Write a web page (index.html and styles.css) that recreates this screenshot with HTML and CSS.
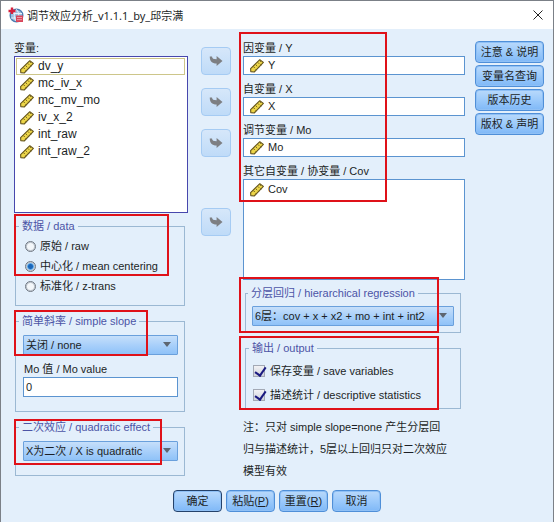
FILE: index.html
```html
<!DOCTYPE html>
<html lang="zh-CN">
<head>
  <meta charset="UTF-8">
  <meta name="viewport" content="width=device-width, initial-scale=1">
  <title>调节效应分析_v1.1.1_by_邱宗满</title>
  <link rel="stylesheet" href="styles.css">
</head>
<body>
  <!-- shared icons -->
  <svg width="0" height="0" class="sprite">
    <symbol id="ruler" viewBox="0 0 14 14">
      <path d="M.6 9.6 L9.8 .7 L13.4 3.4 L4.2 13 L.8 12.6 Z" fill="#ecd548" stroke="#66561c" stroke-width="1.1" stroke-linejoin="round"/>
      <path d="M3.4 7.6l1.4 1.4M5.6 5.5l1.4 1.4M7.8 3.4l1.4 1.4M9.6 1.6l1.2 1.2M5.6 10.2l.9.9M8 7.8l.9.9M10.4 5.4l.9.9" stroke="#66561c" stroke-width=".9"/>
    </symbol>
    <symbol id="arrow" viewBox="0 0 14 12">
      <path d="M.8 1.5 L3 1.5 C3.2 3.6 4.4 4.2 7.6 4.2 V1 L13.5 6 L7.6 11 V8.6 C3 8.6 .6 6 .8 1.5 Z" fill="#7d7f83"/>
    </symbol>
  </svg>

  <div class="window">
    <header class="titlebar">
      <svg class="app-icon" width="16" height="16" viewBox="0 0 16 16">
        <circle cx="8.5" cy="8.5" r="6.3" fill="#9dc0e0" stroke="#4b7cb0" stroke-width="1.4"/>
        <path d="M3 6.5h11M3 11h11M8.5 2.5c-3 3-3 9 0 12c3-3 3-9 0-12" fill="none" stroke="#e9f2fa"/>
        <path d="M4 .5v6.5M.5 4h7" stroke="#d5203c" stroke-width="2.4"/>
        <rect x="8" y="8.5" width="7" height="6.5" fill="#d8455a"/>
        <path d="M9 10.5h5M9 12.7h5" stroke="#f0b4bc" stroke-width=".8"/>
      </svg>
      <h1>调节效应分析_v1.1.1_by_邱宗满</h1>
      <button class="close" aria-label="关闭">
        <svg width="10" height="10" viewBox="0 0 10 10"><path d="M.5.5l9 9M9.5.5l-9 9" stroke="#222" fill="none"/></svg>
      </button>
    </header>

    <form class="content">
      <div class="left">
        <span class="label" id="vars-label">变量:</span>
        <ul class="list variables" aria-labelledby="vars-label">
          <li class="focused"><svg class="ruler"><use href="#ruler"/></svg>dv_y</li>
          <li><svg class="ruler"><use href="#ruler"/></svg>mc_iv_x</li>
          <li><svg class="ruler"><use href="#ruler"/></svg>mc_mv_mo</li>
          <li><svg class="ruler"><use href="#ruler"/></svg>iv_x_2</li>
          <li><svg class="ruler"><use href="#ruler"/></svg>int_raw</li>
          <li><svg class="ruler"><use href="#ruler"/></svg>int_raw_2</li>
        </ul>

        <div class="group data">
          <fieldset>
            <legend>数据 / data</legend>
            <label class="option"><input type="radio" name="data">原始 / raw</label>
            <label class="option"><input type="radio" name="data" checked>中心化 / mean centering</label>
            <label class="option"><input type="radio" name="data">标准化 / z-trans</label>
          </fieldset>
          <div class="mark"></div>
        </div>

        <div class="group slope">
          <fieldset>
            <legend>简单斜率 / simple slope</legend>
            <div class="select">
              <select aria-label="简单斜率"><option>关闭 / none</option></select>
            </div>
            <label class="label mo-label" for="mo-value">Mo 值 / Mo value</label>
            <input class="text" type="text" id="mo-value" value="0">
          </fieldset>
          <div class="mark"></div>
        </div>

        <div class="group quadratic">
          <fieldset>
            <legend>二次效应 / quadratic effect</legend>
            <div class="select">
              <select aria-label="二次效应"><option>X为二次 / X is quadratic</option></select>
            </div>
          </fieldset>
          <div class="mark"></div>
        </div>
      </div>

      <div class="arrows">
        <button type="button" class="move" aria-label="Y"><svg width="14" height="12"><use href="#arrow"/></svg></button>
        <button type="button" class="move" aria-label="X"><svg width="14" height="12"><use href="#arrow"/></svg></button>
        <button type="button" class="move" aria-label="Mo"><svg width="14" height="12"><use href="#arrow"/></svg></button>
        <button type="button" class="move cov" aria-label="Cov"><svg width="14" height="12"><use href="#arrow"/></svg></button>
      </div>

      <div class="middle">
        <div class="targets">
          <div>
            <label class="label" for="y">因变量 / Y</label>
            <div class="target"><svg class="ruler"><use href="#ruler"/></svg><input type="text" id="y" value="Y"></div>
          </div>
          <div>
            <label class="label" for="x">自变量 / X</label>
            <div class="target"><svg class="ruler"><use href="#ruler"/></svg><input type="text" id="x" value="X"></div>
          </div>
          <div>
            <label class="label" for="mo">调节变量 / Mo</label>
            <div class="target"><svg class="ruler"><use href="#ruler"/></svg><input type="text" id="mo" value="Mo"></div>
          </div>
          <div>
            <span class="label" id="cov-label">其它自变量 / 协变量 / Cov</span>
            <ul class="list covariates" aria-labelledby="cov-label">
              <li><svg class="ruler"><use href="#ruler"/></svg>Cov</li>
            </ul>
          </div>
          <div class="mark"></div>
        </div>

        <div class="group regression">
          <fieldset>
            <legend>分层回归 / hierarchical regression</legend>
            <div class="select">
              <select aria-label="分层回归"><option>6层：cov + x + x2 + mo + int + int2</option></select>
            </div>
          </fieldset>
          <div class="mark"></div>
        </div>

        <div class="group output">
          <fieldset>
            <legend>输出 / output</legend>
            <label class="option"><input type="checkbox" checked>保存变量 / save variables</label>
            <label class="option"><input type="checkbox" checked>描述统计 / descriptive statistics</label>
          </fieldset>
          <div class="mark"></div>
        </div>

        <p class="note">注：只对 simple slope=none 产生分层回<br>归与描述统计，5层以上回归只对二次效应<br>模型有效</p>
      </div>

      <div class="side">
        <button type="button" class="btn">注意 &amp; 说明</button>
        <button type="button" class="btn">变量名查询</button>
        <button type="button" class="btn">版本历史</button>
        <button type="button" class="btn">版权 &amp; 声明</button>
      </div>
    </form>

    <footer class="footer">
      <button class="btn default">确定</button>
      <button class="btn">粘贴(<u>P</u>)</button>
      <button class="btn">重置(<u>R</u>)</button>
      <button class="btn">取消</button>
    </footer>
  </div>
</body>
</html>
```
FILE: styles.css
```css
* {
  box-sizing: border-box;
}

body {
  margin: 0;
  font-family: "Liberation Sans", "Noto Sans CJK SC", sans-serif;
  font-size: 11px;
  line-height: 15px;
  color: #1c1f26;
}

button, input, select {
  margin: 0;
  font: inherit;
  color: inherit;
}

.sprite {
  position: absolute;
}

.window {
  min-height: 100vh;
  border: 1px solid #7b8087;
  border-bottom: 0;
  background: #e3effb;
}

/* title bar */
.titlebar {
  display: flex;
  align-items: center;
  height: 28px;
  padding: 0 10px 0 7px;
  background: #fff;
}

.titlebar h1 {
  flex: 1;
  margin: 0 0 0 3px;
  font: 11px/15px "Noto Sans", "Noto Sans CJK SC", sans-serif;
}

.close {
  display: flex;
  padding: 0;
  border: 0;
  background: none;
}

/* columns */
.content {
  display: flex;
  padding: 12px 9px 0 13px;
}

.left {
  width: 174px;
}

.arrows {
  display: flex;
  flex-direction: column;
  gap: 13px;
  width: 30px;
  margin: 6px 12px 0 13px;
}

.middle {
  flex: 1;
}

.side {
  display: flex;
  flex-direction: column;
  gap: 2px;
  width: 69px;
  margin-left: 10px;
}

.label {
  display: block;
  height: 15px;
  white-space: nowrap;
}

/* lists */
.list {
  margin: 0;
  padding: 1px;
  list-style: none;
  background: #fff;
  border: 1px solid #5b94d0;
}

.list li {
  display: flex;
  align-items: center;
  height: 17px;
  padding-left: 4px;
  border: 1px solid transparent;
}

.variables {
  height: 157px;
  padding: 1px;
  border-color: #4747ad;
  font-size: 12px;
}

.variables li {
  padding-left: 3px;
}

.list .focused {
  margin-right: 1px;
  border-color: #cdc68a;
}

.covariates {
  height: 101px;
}

.ruler {
  flex: none;
  width: 14px;
  height: 14px;
  margin-right: 4px;
}

/* target fields */
.targets {
  position: relative;
  display: flex;
  flex-direction: column;
  gap: 7px;
}

.target {
  display: flex;
  align-items: center;
  height: 19px;
  padding-left: 6px;
  background: #fff;
  border: 1px solid #5b94d0;
}

.target input {
  flex: 1;
  min-width: 0;
  padding: 0;
  border: 0;
  background: none;
}

/* group boxes */
.group {
  position: relative;
  margin: 8px 3px 0 1px;
}

.group fieldset {
  min-width: 0;
  margin: 0;
  padding: 6px 6px 14px 7px;
  border: 1px solid #9bb8d3;
}

.group legend {
  height: 15px;
  margin-left: -4px;
  padding: 0 3px;
  color: #4c54a6;
  white-space: nowrap;
}

.data {
  margin-top: 6px;
}

.data fieldset {
  padding: 2px 6px 9px 9px;
}

.data legend {
  margin-left: -6px;
}

.regression {
  margin: 6px 4px 0 2px;
}

.regression fieldset {
  padding: 5px 6px 6px 6px;
}

.output {
  margin: 8px 4px 0 2px;
}

.output fieldset {
  padding: 3px 6px 1px 7px;
}

.option {
  display: flex;
  align-items: center;
  gap: 4px;
  height: 20px;
  white-space: nowrap;
}

.output .option {
  gap: 5px;
  height: 24px;
}

input[type="radio"] {
  appearance: none;
  width: 11px;
  height: 11px;
  border: 1px solid #6f7782;
  border-radius: 50%;
  background: #f4f7fa;
  box-shadow: inset 0 0 0 1px #bcc4cd;
}

input[type="radio"]:checked {
  background: radial-gradient(circle, #1b66b8 0 2px, #5aa9ec 3px, #d4e8fa 4px);
}

input[type="checkbox"] {
  appearance: none;
  width: 12px;
  height: 12px;
  border: 1px solid #a3a9b5;
  background: linear-gradient(#f2f2f5, #d0d3dc);
}

/* tick */
input[type="checkbox"]:checked::after {
  content: "";
  display: block;
  width: 5px;
  height: 9px;
  margin: -1px 0 0 3px;
  border: solid #1a1a80;
  border-width: 0 2px 2px 0;
  transform: rotate(35deg);
}

.select {
  position: relative;
}

.select select {
  display: block;
  appearance: none;
  width: 100%;
  height: 20px;
  padding: 0 18px 0 2px;
  border: 1px solid #6aa0dc;
  border-radius: 1px;
  background: linear-gradient(#c6dffa, #a9d0fa 50%, #8fc2f8);
}

.select::after {
  content: "";
  position: absolute;
  top: 7px;
  right: 7px;
  border: 4px solid transparent;
  border-top: 5px solid #5d6671;
  border-bottom: 0;
  pointer-events: none;
}

.mo-label {
  margin-top: 7px;
  padding-left: 1px;
}

.text {
  display: block;
  width: 100%;
  height: 20px;
  padding: 0 2px;
  border: 1px solid #5b94d0;
  background: #fff;
}

.note {
  margin: 7px 0 0;
  line-height: 22px;
  white-space: nowrap;
}

/* buttons */
.btn {
  height: 22px;
  padding: 0;
  border: 1px solid #4f8fd8;
  border-radius: 4px;
  background: linear-gradient(#b9d9fb, #9ccafb 50%, #7fb8f7);
  box-shadow: inset 0 0 0 1px #8fc0f5;
  white-space: nowrap;
}

.move {
  display: flex;
  align-items: center;
  justify-content: center;
  height: 28px;
  padding: 0;
  border: 1px solid #a5cbf3;
  border-radius: 4px;
  background: linear-gradient(#d6e7fa, #bfdbf8);
}

.move.cov {
  margin-top: 38px;
}

.footer {
  display: flex;
  justify-content: center;
  gap: 4px;
  padding: 8px 0 10px;
}

.footer .btn {
  width: 49px;
}

.footer .default {
  border-color: #24426b;
}

/* red highlight frames */
.mark {
  position: absolute;
  border: 2px solid #df1119;
  pointer-events: none;
}

.targets .mark {
  top: -9px;
  left: -4px;
  width: 148px;
  height: 170px;
}

.data .mark {
  top: -5px;
  left: -1px;
  width: 155px;
  height: 62px;
}

.slope .mark {
  top: -4px;
  left: -1px;
  width: 134px;
  height: 46px;
}

.quadratic .mark {
  top: -1px;
  left: -1px;
  width: 148px;
  height: 46px;
}

.regression .mark {
  top: -9px;
  left: -6px;
  width: 200px;
  height: 56px;
}

.output .mark {
  top: -5px;
  left: -6px;
  width: 200px;
  height: 74px;
}
```
